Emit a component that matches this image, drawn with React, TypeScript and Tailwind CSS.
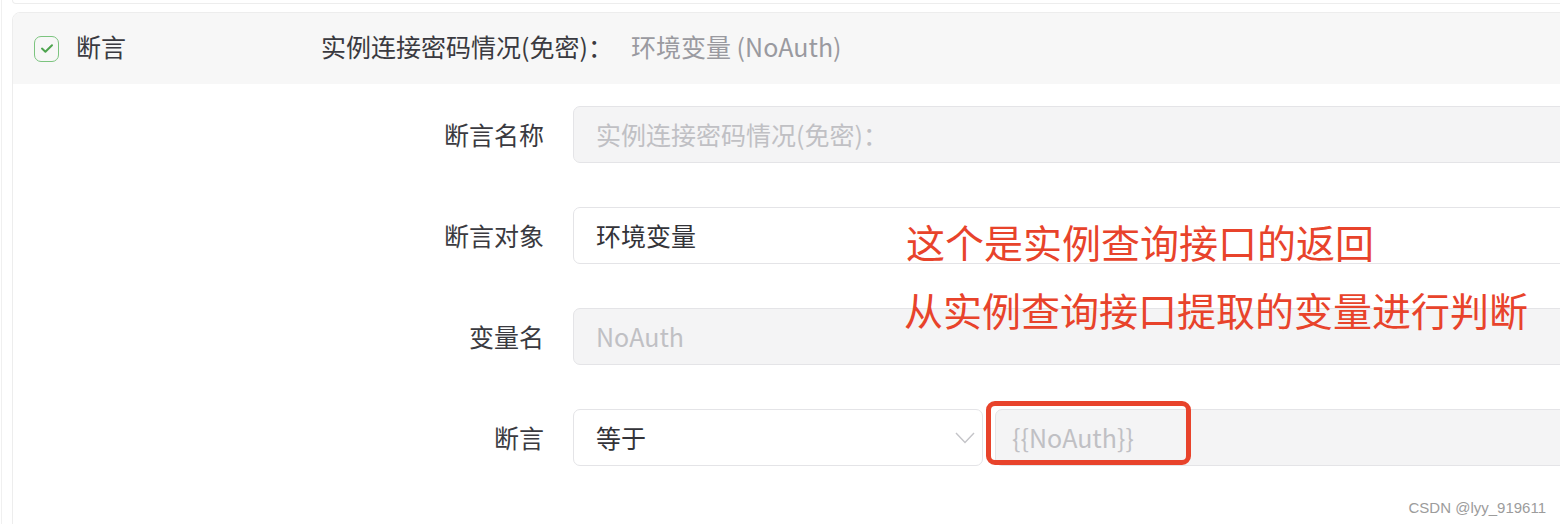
const font = { fontFamily: '"PingFang SC", "Noto Sans CJK SC", "Noto Sans", sans-serif' }

function Row({ label, children }: { label: string; children: React.ReactNode }) {
  return (
    <div className="flex items-center h-[57px]">
      <div className="w-[560px] shrink-0 pr-[29px] text-right text-[25px] text-[#3a3a40]">{label}</div>
      <div className="flex-1 flex h-full min-w-0">{children}</div>
    </div>
  )
}

function Field({ value, disabled, className = 'pl-[22px]' }: { value: string; disabled?: boolean; className?: string }) {
  return (
    <div
      className={`flex-1 h-full flex items-center rounded-[7px] border border-[#e4e4e7] text-[25px] whitespace-nowrap ${
        disabled ? 'bg-[#f4f4f5] text-[#c0c0c4]' : 'bg-white text-[#333338]'
      } ${className}`}
    >
      {value}
    </div>
  )
}

export default function App() {
  return (
    <div className="relative w-[1560px] h-[524px] overflow-hidden bg-white" style={font}>
      <div className="ml-[1px] h-full border-l border-[#f0f0f0] pl-[10px]">
        {/* tail of the previous card */}
        <div className="h-[4px] -mr-4 border border-t-0 border-[#ededed] rounded-b-lg" />
        <div className="mt-[8px] -mr-4 h-[600px] border border-[#ededed] rounded-t-lg overflow-hidden">
          <div className="h-[71px] bg-[#f7f7f7] flex items-center pl-[21px] pb-[3px]">
            <div className="w-[287px] flex items-center">
              <div className="w-[25px] h-[26px] rounded-[7px] border-[1.5px] border-[#7cc47f] flex items-center justify-center mt-[3px]">
                <svg width="14" height="11" viewBox="0 0 14 11" fill="none">
                  <path d="M2 5.6 L5.4 8.8 L12 2.2" stroke="#4ea44f" strokeWidth="2" strokeLinecap="round" strokeLinejoin="round" />
                </svg>
              </div>
              <span className="ml-[17px] text-[25px] text-[#3a3a40]">断言</span>
            </div>
            <span className="w-[310px] text-[25px] text-[#3a3a40]">实例连接密码情况(免密)：</span>
            <span className="text-[25px] text-[#9a9aa0]">环境变量 (NoAuth)</span>
          </div>
          <div className="pt-[22px] flex flex-col gap-[44px]">
            <Row label="断言名称">
              <Field value="实例连接密码情况(免密)：" disabled />
            </Row>
            <Row label="断言对象">
              <Field value="环境变量" />
            </Row>
            <Row label="变量名">
              <Field value="NoAuth" disabled />
            </Row>
            <Row label="断言">
              <div className="w-[410px] h-full flex items-center justify-between pl-[22px] pr-[7px] rounded-[7px] border border-[#e4e4e7] bg-white text-[25px] text-[#333338]">
                <span>等于</span>
                <svg width="20" height="12" viewBox="0 0 20 12" fill="none">
                  <path d="M1 1 L10 10.5 L19 1" stroke="#c4c4c8" strokeWidth="1.4" />
                </svg>
              </div>
              <Field value="{{NoAuth}}" disabled className="ml-[12px] pl-[16px]" />
            </Row>
          </div>
        </div>
      </div>

      {/* annotations */}
      <div className="absolute left-[904px] top-[207px] text-[39px] leading-[68px] text-[#e8432b]">
        <div className="pl-[2px]">这个是实例查询接口的返回</div>
        <div>从实例查询接口提取的变量进行判断</div>
      </div>
      <div className="absolute left-[986px] top-[401px] w-[205px] h-[64px] rounded-[9px] border-[5px] border-[#e8432b]" />
      <div
        className="absolute right-[14px] top-[497px] text-[15px] text-[#9c9c9c]"
        style={{ fontFamily: '"Liberation Sans", Arial, sans-serif', textShadow: '0 0 2px #fff' }}
      >
        CSDN @lyy_919611
      </div>
    </div>
  )
}
